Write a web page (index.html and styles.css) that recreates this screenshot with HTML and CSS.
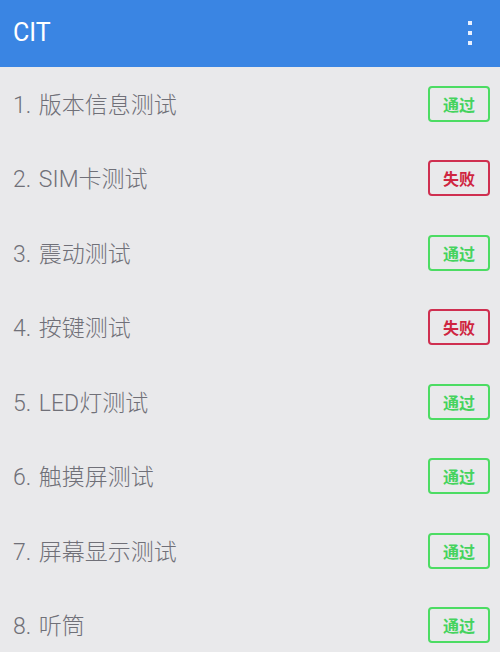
FILE: index.html
```html
<!DOCTYPE html>
<html lang="zh">
<head>
<meta charset="utf-8">
<link rel="stylesheet" href="styles.css">
</head>
<body>
<header class="bar">
  <span class="title">CIT</span>
  <span class="menu"><i></i><i></i><i></i></span>
</header>
<ul class="list">
  <li class="row"><span class="label">1. 版本信息测试</span><span class="badge pass">通过</span></li>
  <li class="row"><span class="label">2. SIM卡测试</span><span class="badge fail">失败</span></li>
  <li class="row"><span class="label">3. 震动测试</span><span class="badge pass">通过</span></li>
  <li class="row"><span class="label">4. 按键测试</span><span class="badge fail">失败</span></li>
  <li class="row"><span class="label">5. LED灯测试</span><span class="badge pass">通过</span></li>
  <li class="row"><span class="label">6. 触摸屏测试</span><span class="badge pass">通过</span></li>
  <li class="row"><span class="label">7. 屏幕显示测试</span><span class="badge pass">通过</span></li>
  <li class="row"><span class="label">8. 听筒</span><span class="badge pass">通过</span></li>
</ul>
</body>
</html>
```
FILE: styles.css
```css
html, body {
  margin: 0;
  padding: 0;
  background: #e9e9eb;
  font-family: Roboto, "Noto Sans CJK SC", sans-serif;
}
.bar {
  height: 67px;
  background: #3a85e3;
  display: flex;
  align-items: center;
  justify-content: space-between;
  padding: 0 28px 0 13px;
  box-sizing: border-box;
}
.title {
  color: #ffffff;
  font-size: 25px;
  line-height: 1;
  margin-top: -2px;
}
.menu {
  display: flex;
  flex-direction: column;
  gap: 6px;
  margin-top: -2px;
}
.menu i {
  display: block;
  width: 4px;
  height: 4px;
  background: #e8f0ff;
}
.list {
  list-style: none;
  margin: 0;
  padding: 0;
}
.row {
  height: 74.5px;
  display: flex;
  align-items: center;
  justify-content: space-between;
  padding: 0 10px 0 13px;
}
.label {
  font-size: 23px;
  font-weight: 300;
  color: #707078;
  font-family: Roboto, "Noto Sans CJK SC", sans-serif;
  margin-top: -3px;
  word-spacing: 2px;
}
.badge {
  width: 62px;
  height: 36px;
  box-sizing: border-box;
  border: 2.5px solid;
  border-radius: 4px;
  display: flex;
  align-items: center;
  justify-content: center;
  font-size: 16px;
  font-weight: 700;
  margin-top: -1px;
}
.pass {
  border-color: #4cdc63;
  color: #45d35e;
}
.fail {
  border-color: #cf2f50;
  color: #cf2540;
}
```
